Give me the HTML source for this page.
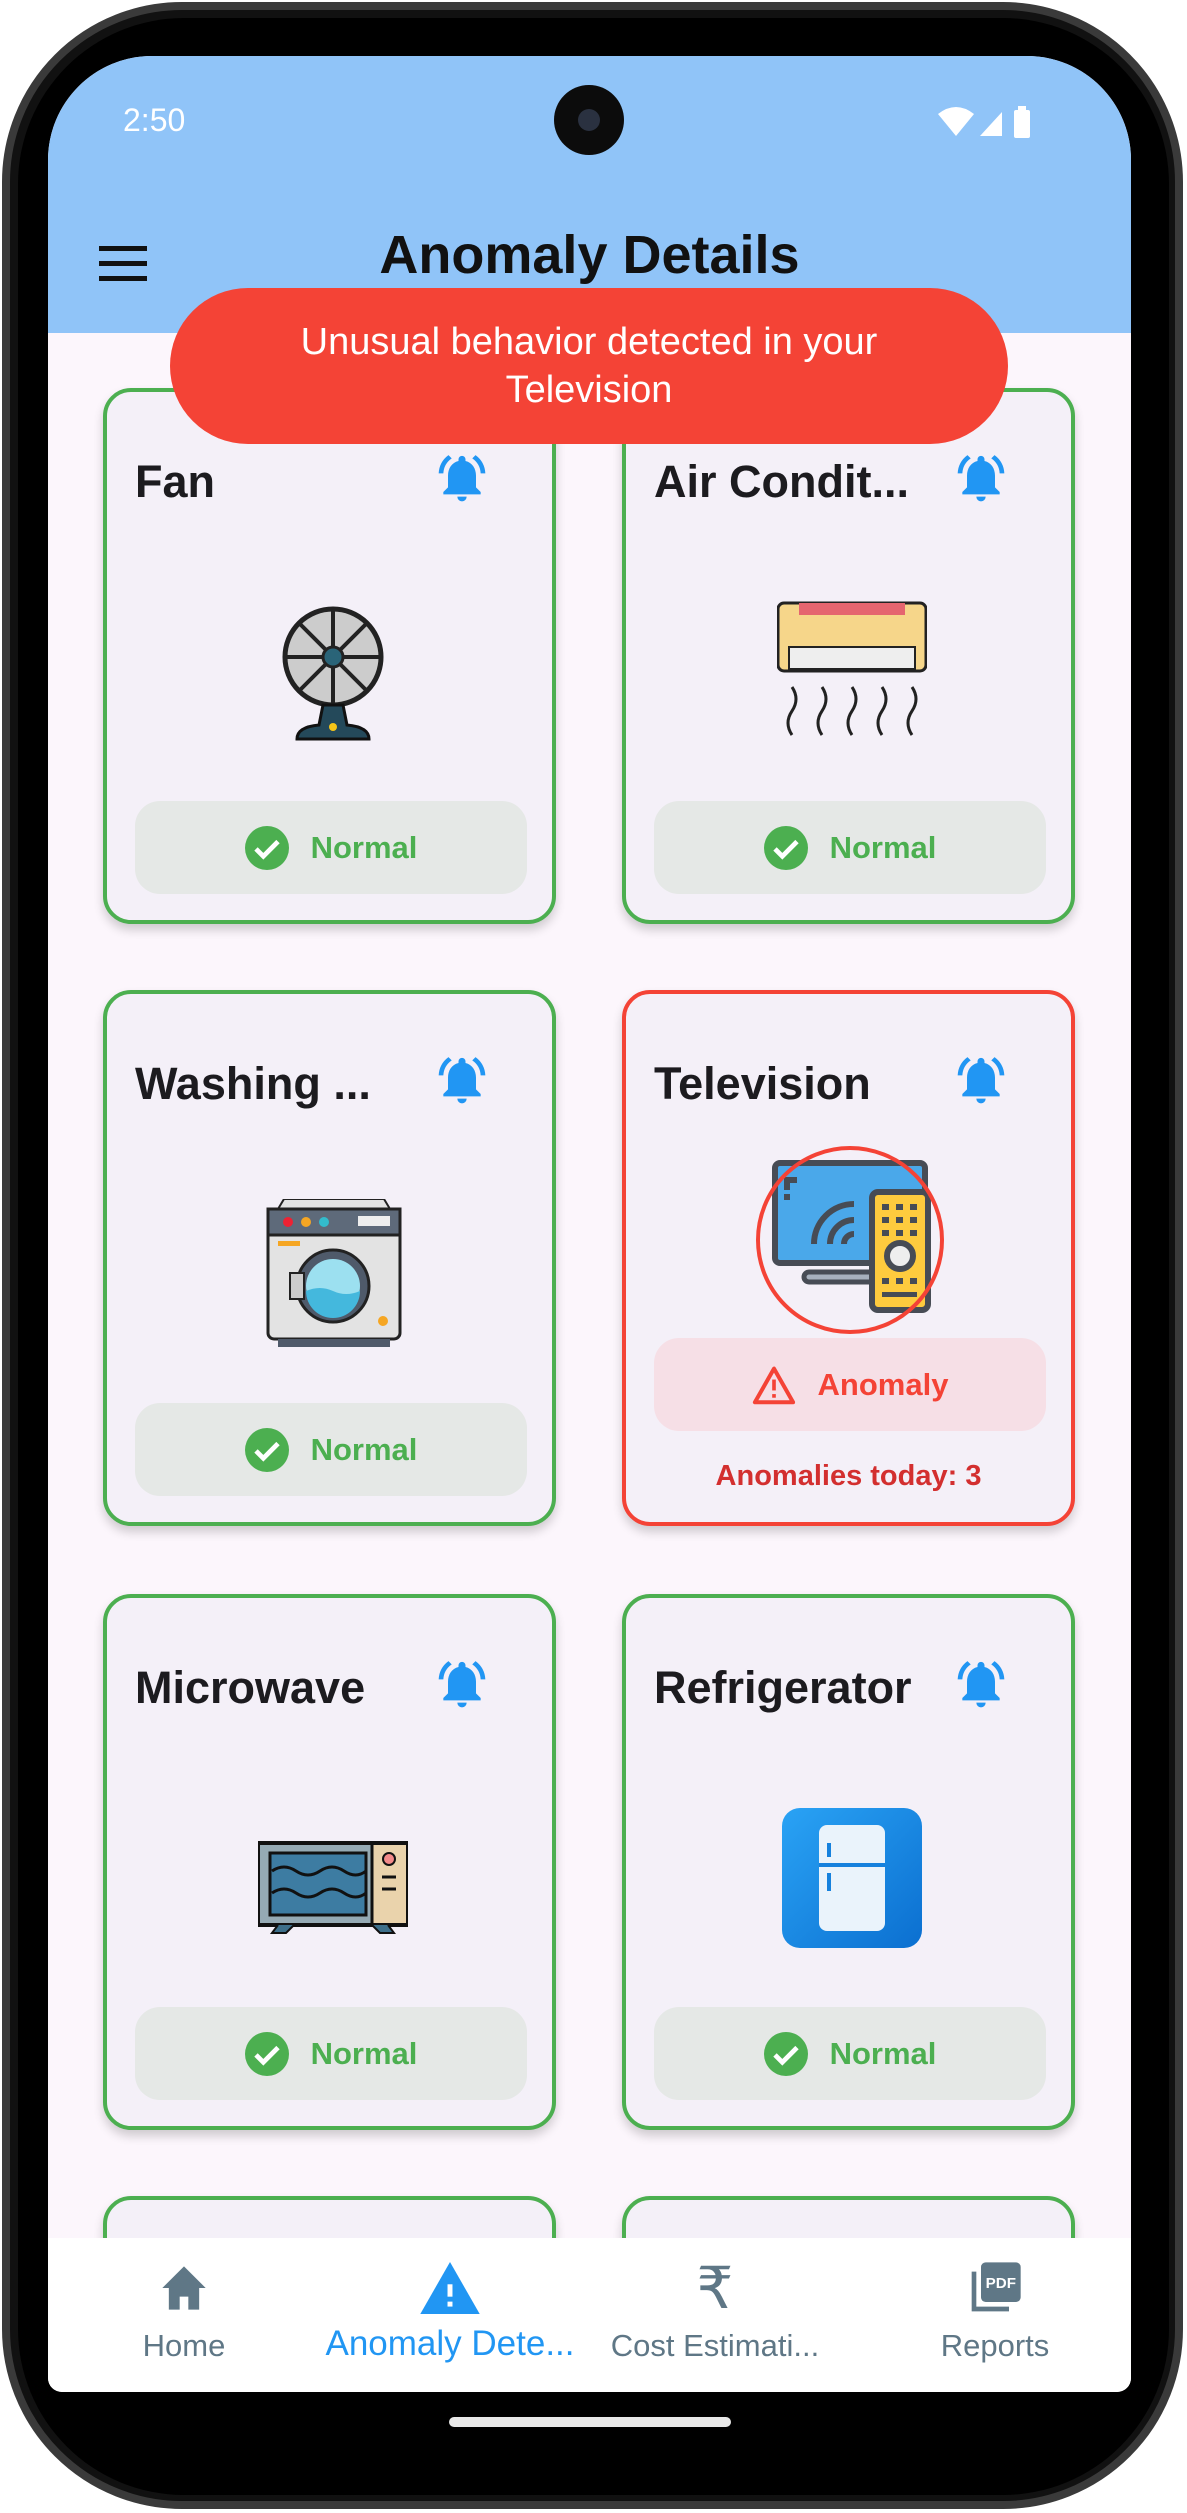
<!DOCTYPE html>
<html><head><meta charset="utf-8">
<style>
*{margin:0;padding:0;box-sizing:border-box}
html,body{width:1187px;height:2513px;overflow:hidden}
body{background:#fff;position:relative;font-family:"Liberation Sans",sans-serif}
.phone{position:absolute;left:2px;top:2px;width:1181px;height:2507px;border-radius:180px;background:#111;border:8px solid #3a3a3a}
.phone2{position:absolute;left:18px;top:18px;width:1151px;height:2477px;border-radius:166px;background:#000}
.screen{position:absolute;left:48px;top:56px;width:1083px;height:2336px;border-radius:104px 104px 14px 14px;overflow:hidden;background:#fcf6fc}
.appbar{position:absolute;left:0;top:0;width:1083px;height:277px;background:#90c4f8}
.time{position:absolute;left:75px;top:46px;color:#fff;font-size:32px}
.cam{position:absolute;left:506px;top:29px;width:70px;height:70px;border-radius:50%;background:#0c0c0c}
.cam:after{content:"";position:absolute;left:24px;top:24px;width:22px;height:22px;border-radius:50%;background:#2a3140}
.title{position:absolute;left:0;width:1083px;top:168px;text-align:center;font-size:54px;font-weight:bold;color:#111}
.ham{position:absolute;left:51px;top:190px;width:48px}
.ham i{display:block;height:5px;background:#111;margin-bottom:10px}
.card{position:absolute;width:453px;height:536px;border:4px solid #4caf50;border-radius:28px;background:#f4f0f8;box-shadow:0 6px 10px rgba(0,0,0,.18)}
.card.red{border-color:#f44336}
.ct{position:absolute;left:28px;top:64px;font-size:45px;font-weight:bold;color:#1c1b1f}
.bell{position:absolute;left:327px;top:58px}
.img{position:absolute;left:151px;top:205px;width:150px;height:150px}
.pill{position:absolute;left:28px;top:409px;width:392px;height:93px;border-radius:25px;background:#e5e8e6;display:flex;align-items:center;justify-content:center;font-size:31px;font-weight:bold;color:#4caf50}
.pill svg{margin-right:22px}
.nav{position:absolute;left:0;top:2182px;width:1083px;height:154px;background:#fff}
.ni{position:absolute;top:0;height:154px;text-align:center;color:#5f7786;font-size:31px}
.ni .ic{position:absolute;left:0;right:0;top:20px;height:60px;display:flex;justify-content:center;align-items:center}
.ni .lb{position:absolute;left:0;right:0;top:90px;white-space:nowrap}
.toast{position:absolute;left:122px;top:232px;width:838px;height:156px;border-radius:78px;background:#f44336;color:#fff;font-size:38px;text-align:center;padding-top:30px;line-height:48px;z-index:5}
.bar{position:absolute;left:449px;top:2417px;width:282px;height:10px;border-radius:5px;background:#e8e8e8}
</style></head><body>
<div class="phone"></div><div class="phone2"></div>
<div class="screen">
<div class="appbar"></div>
<div class="time">2:50</div>
<div class="cam"></div>
<svg style="position:absolute;left:890px;top:46px" width="100" height="40" viewBox="0 0 100 40">
<path d="M0 12 Q18 -2 36 12 L18 34Z" fill="#fff"/><path d="M42 34 L64 10 V34Z" fill="#fff"/><rect x="76" y="8" width="16" height="28" rx="2" fill="#fff"/><rect x="80" y="4" width="8" height="5" fill="#fff"/></svg>
<div class="ham"><i></i><i></i><i></i></div>
<div class="title">Anomaly Details</div>

<div class="card" style="left:55px;top:332px">
 <div class="ct">Fan</div>
 <svg class="bell" width="56" height="56" viewBox="0 0 24 24"><path d="M12 22a2 2 0 0 0 2-2h-4a2 2 0 0 0 2 2zm6-6v-5c0-3.1-1.6-5.6-4.5-6.3V4a1.5 1.5 0 0 0-3 0v.7C7.6 5.4 6 7.9 6 11v5l-2 2v1h16v-1z" fill="#2196f3"/><path d="M7.6 3.6L6.2 2.2A10.4 10.4 0 0 0 2 10h2a8.4 8.4 0 0 1 3.6-6.4zM20 10h2a10.4 10.4 0 0 0-4.2-7.8l-1.4 1.4A8.4 8.4 0 0 1 20 10z" fill="#2196f3"/></svg>
 <svg class="img" viewBox="0 0 150 150"><circle cx="75" cy="60" r="48" fill="#ccc" stroke="#222" stroke-width="5"/><g stroke="#222" stroke-width="4" fill="none"><path d="M75 14V106M29 60H121M42 27L108 93M108 27L42 93"/></g><circle cx="75" cy="60" r="10" fill="#2a6478" stroke="#222" stroke-width="3"/><path d="M65 108h20l4 20q22 2 22 14H39q0-12 22-14z" fill="#24495a" stroke="#111" stroke-width="3"/><circle cx="75" cy="130" r="4" fill="#f5c518"/></svg>
 <div class="pill"><svg width="44" height="44" viewBox="0 0 24 24"><circle cx="12" cy="12" r="12" fill="#4caf50"/><path d="M6 12.5l4 4 8-8" stroke="#fff" stroke-width="2.6" fill="none"/></svg>Normal</div>
</div>

<div class="card" style="left:574px;top:332px">
 <div class="ct">Air Condit...</div>
 <svg class="bell" width="56" height="56" viewBox="0 0 24 24"><path d="M12 22a2 2 0 0 0 2-2h-4a2 2 0 0 0 2 2zm6-6v-5c0-3.1-1.6-5.6-4.5-6.3V4a1.5 1.5 0 0 0-3 0v.7C7.6 5.4 6 7.9 6 11v5l-2 2v1h16v-1z" fill="#2196f3"/><path d="M7.6 3.6L6.2 2.2A10.4 10.4 0 0 0 2 10h2a8.4 8.4 0 0 1 3.6-6.4zM20 10h2a10.4 10.4 0 0 0-4.2-7.8l-1.4 1.4A8.4 8.4 0 0 1 20 10z" fill="#2196f3"/></svg>
 <svg class="img" viewBox="0 0 150 150"><rect x="1" y="6" width="148" height="68" rx="6" fill="#f6d68a" stroke="#222" stroke-width="3"/><rect x="22" y="6" width="106" height="12" fill="#e5656f"/><rect x="12" y="50" width="126" height="22" fill="#eee" stroke="#222" stroke-width="2"/><g stroke="#222" stroke-width="3" fill="none"><path d="M15 90q8 12 0 24t0 24M45 90q8 12 0 24t0 24M75 90q8 12 0 24t0 24M105 90q8 12 0 24t0 24M135 90q8 12 0 24t0 24"/></g></svg>
 <div class="pill"><svg width="44" height="44" viewBox="0 0 24 24"><circle cx="12" cy="12" r="12" fill="#4caf50"/><path d="M6 12.5l4 4 8-8" stroke="#fff" stroke-width="2.6" fill="none"/></svg>Normal</div>
</div>

<div class="card" style="left:55px;top:934px">
 <div class="ct">Washing ...</div>
 <svg class="bell" width="56" height="56" viewBox="0 0 24 24"><path d="M12 22a2 2 0 0 0 2-2h-4a2 2 0 0 0 2 2zm6-6v-5c0-3.1-1.6-5.6-4.5-6.3V4a1.5 1.5 0 0 0-3 0v.7C7.6 5.4 6 7.9 6 11v5l-2 2v1h16v-1z" fill="#2196f3"/><path d="M7.6 3.6L6.2 2.2A10.4 10.4 0 0 0 2 10h2a8.4 8.4 0 0 1 3.6-6.4zM20 10h2a10.4 10.4 0 0 0-4.2-7.8l-1.4 1.4A8.4 8.4 0 0 1 20 10z" fill="#2196f3"/></svg>
 <svg class="img" viewBox="0 0 150 150"><path d="M20 10l6-10h100l6 10z" fill="#e3e3e3" stroke="#222" stroke-width="2"/><rect x="10" y="10" width="132" height="130" rx="6" fill="#e3e3e3" stroke="#222" stroke-width="3"/><rect x="10" y="10" width="132" height="26" fill="#5e6a7a" stroke="#222" stroke-width="3"/><circle cx="30" cy="23" r="5" fill="#e23"/><circle cx="48" cy="23" r="5" fill="#f5a623"/><circle cx="66" cy="23" r="5" fill="#3bc"/><rect x="100" y="17" width="32" height="10" fill="#eee"/><rect x="20" y="42" width="22" height="5" fill="#f5a623"/><circle cx="75" cy="87" r="36" fill="#4f5a6a" stroke="#222" stroke-width="3"/><circle cx="75" cy="87" r="27" fill="#9ce0f0"/><path d="M48 92q14-6 27 0t27 0 A27 27 0 0 1 48 92z" fill="#44b8dd"/><rect x="32" y="74" width="14" height="26" fill="#ccc" stroke="#222" stroke-width="2"/><circle cx="125" cy="122" r="5" fill="#f5a623"/><rect x="20" y="140" width="112" height="8" fill="#4f5a6a"/></svg>
 <div class="pill"><svg width="44" height="44" viewBox="0 0 24 24"><circle cx="12" cy="12" r="12" fill="#4caf50"/><path d="M6 12.5l4 4 8-8" stroke="#fff" stroke-width="2.6" fill="none"/></svg>Normal</div>
</div>

<div class="card red" style="left:574px;top:934px">
 <div class="ct">Television</div>
 <svg class="bell" width="56" height="56" viewBox="0 0 24 24"><path d="M12 22a2 2 0 0 0 2-2h-4a2 2 0 0 0 2 2zm6-6v-5c0-3.1-1.6-5.6-4.5-6.3V4a1.5 1.5 0 0 0-3 0v.7C7.6 5.4 6 7.9 6 11v5l-2 2v1h16v-1z" fill="#2196f3"/><path d="M7.6 3.6L6.2 2.2A10.4 10.4 0 0 0 2 10h2a8.4 8.4 0 0 1 3.6-6.4zM20 10h2a10.4 10.4 0 0 0-4.2-7.8l-1.4 1.4A8.4 8.4 0 0 1 20 10z" fill="#2196f3"/></svg>
 <svg style="position:absolute;left:128px;top:150px" width="196" height="196" viewBox="0 0 196 196">
  <rect x="21" y="19" width="150" height="100" rx="5" fill="#4aa8ea" stroke="#474c55" stroke-width="6"/>
  <path d="M33 46v-10h10M33 50v6" stroke="#474c55" stroke-width="6" fill="none"/>
  <rect x="50" y="128" width="76" height="10" rx="5" fill="#a6b0bd" stroke="#474c55" stroke-width="5"/>
  <g stroke="#474c55" stroke-width="6" fill="none"><path d="M60 100a40 40 0 0 1 40-40M76 100a24 24 0 0 1 24-24M90 100a10 10 0 0 1 10-10"/></g>
  <rect x="118" y="48" width="56" height="118" rx="6" fill="#fecb3e" stroke="#474c55" stroke-width="6"/>
  <circle cx="146" cy="112" r="13" fill="#eee" stroke="#474c55" stroke-width="6"/>
  <g fill="#474c55"><rect x="128" y="60" width="7" height="6"/><rect x="142" y="60" width="7" height="6"/><rect x="156" y="60" width="7" height="6"/><rect x="128" y="73" width="7" height="6"/><rect x="142" y="73" width="7" height="6"/><rect x="156" y="73" width="7" height="6"/><rect x="128" y="86" width="7" height="6"/><rect x="142" y="86" width="7" height="6"/><rect x="156" y="86" width="7" height="6"/><rect x="128" y="134" width="7" height="6"/><rect x="142" y="134" width="7" height="6"/><rect x="156" y="134" width="7" height="6"/><rect x="128" y="148" width="35" height="5"/></g>
  <circle cx="96" cy="96" r="92" fill="none" stroke="#f44336" stroke-width="4"/>
 </svg>
 <div class="pill" style="top:344px;background:#f6dfe6;color:#f44336"><svg width="44" height="40" viewBox="0 0 24 22"><path d="M12 2L1.5 20.5h21z" fill="none" stroke="#f44336" stroke-width="2.2" stroke-linejoin="round"/><rect x="11" y="8" width="2" height="6" fill="#f44336"/><rect x="11" y="16" width="2" height="2" fill="#f44336"/></svg>Anomaly</div>
 <div style="position:absolute;left:0;width:445px;top:466px;text-align:center;color:#d32f2f;font-size:29px;font-weight:bold">Anomalies today: 3</div>
</div>

<div class="card" style="left:55px;top:1538px">
 <div class="ct">Microwave</div>
 <svg class="bell" width="56" height="56" viewBox="0 0 24 24"><path d="M12 22a2 2 0 0 0 2-2h-4a2 2 0 0 0 2 2zm6-6v-5c0-3.1-1.6-5.6-4.5-6.3V4a1.5 1.5 0 0 0-3 0v.7C7.6 5.4 6 7.9 6 11v5l-2 2v1h16v-1z" fill="#2196f3"/><path d="M7.6 3.6L6.2 2.2A10.4 10.4 0 0 0 2 10h2a8.4 8.4 0 0 1 3.6-6.4zM20 10h2a10.4 10.4 0 0 0-4.2-7.8l-1.4 1.4A8.4 8.4 0 0 1 20 10z" fill="#2196f3"/></svg>
 <svg class="img" viewBox="0 0 150 150"><rect x="0" y="40" width="150" height="82" fill="#95aab4" stroke="#111" stroke-width="4"/><rect x="114" y="42" width="34" height="78" fill="#ead3ac"/><rect x="12" y="50" width="96" height="62" fill="#3d7ca2" stroke="#111" stroke-width="3"/><g stroke="#111" stroke-width="3" fill="none"><path d="M14 68q12-8 24 0t24 0 24 0 22 0M14 90q12-8 24 0t24 0 24 0 22 0M114 42v80"/></g><circle cx="131" cy="56" r="6" fill="#f38a8a" stroke="#111" stroke-width="2"/><path d="M124 74h14M124 86h14" stroke="#111" stroke-width="3"/><path d="M20 122l-6 8h14l8-8M130 122l6 8h-14l-8-8" fill="#3d6f8a" stroke="#111" stroke-width="2"/></svg>
 <div class="pill"><svg width="44" height="44" viewBox="0 0 24 24"><circle cx="12" cy="12" r="12" fill="#4caf50"/><path d="M6 12.5l4 4 8-8" stroke="#fff" stroke-width="2.6" fill="none"/></svg>Normal</div>
</div>

<div class="card" style="left:574px;top:1538px">
 <div class="ct">Refrigerator</div>
 <svg class="bell" width="56" height="56" viewBox="0 0 24 24"><path d="M12 22a2 2 0 0 0 2-2h-4a2 2 0 0 0 2 2zm6-6v-5c0-3.1-1.6-5.6-4.5-6.3V4a1.5 1.5 0 0 0-3 0v.7C7.6 5.4 6 7.9 6 11v5l-2 2v1h16v-1z" fill="#2196f3"/><path d="M7.6 3.6L6.2 2.2A10.4 10.4 0 0 0 2 10h2a8.4 8.4 0 0 1 3.6-6.4zM20 10h2a10.4 10.4 0 0 0-4.2-7.8l-1.4 1.4A8.4 8.4 0 0 1 20 10z" fill="#2196f3"/></svg>
 <svg class="img" viewBox="0 0 150 150"><defs><linearGradient id="g" x1="0" y1="0" x2="1" y2="1"><stop offset="0" stop-color="#2aa3f5"/><stop offset="1" stop-color="#0b6fd0"/></linearGradient></defs><rect x="5" y="5" width="140" height="140" rx="18" fill="url(#g)"/><rect x="42" y="22" width="66" height="106" rx="8" fill="#eaf3fb"/><path d="M42 62h66" stroke="#1681dd" stroke-width="4"/><rect x="50" y="40" width="4" height="14" fill="#1681dd"/><rect x="50" y="70" width="4" height="18" fill="#1681dd"/></svg>
 <div class="pill"><svg width="44" height="44" viewBox="0 0 24 24"><circle cx="12" cy="12" r="12" fill="#4caf50"/><path d="M6 12.5l4 4 8-8" stroke="#fff" stroke-width="2.6" fill="none"/></svg>Normal</div>
</div>

<div class="card" style="left:55px;top:2140px"></div>
<div class="card" style="left:574px;top:2140px"></div>

<div class="toast">Unusual behavior detected in your<br>Television</div>

<div class="nav">
 <div class="ni" style="left:36px;width:200px"><div class="ic"><svg width="52" height="48" viewBox="0 0 24 22"><path d="M12 1L2 11h3v10h5v-6h4v6h5V11h3z" fill="#5f7786"/></svg></div><div class="lb">Home</div></div>
 <div class="ni" style="left:262px;width:280px;color:#2196f3;font-size:35px"><div class="ic"><svg width="60" height="52" viewBox="0 0 24 21"><path d="M12 0L0 21h24z" fill="#2196f3"/><rect x="11" y="9" width="2" height="5" fill="#fff"/><rect x="11" y="16" width="2" height="2" fill="#fff"/></svg></div><div class="lb" style="top:86px">Anomaly Dete...</div></div>
 <div class="ni" style="left:556px;width:222px"><div class="ic" style="font-size:58px">₹</div><div class="lb">Cost Estimati...</div></div>
 <div class="ni" style="left:832px;width:230px"><div class="ic"><svg width="56" height="56" viewBox="0 0 24 24"><path d="M2 5v17h16v-2H4V5z" fill="#5f7786"/><rect x="6" y="1" width="17" height="17" rx="2" fill="#5f7786"/><text x="14.5" y="12" font-size="6.5" font-weight="bold" fill="#fff" text-anchor="middle" font-family="Liberation Sans">PDF</text></svg></div><div class="lb">Reports</div></div>
</div>
</div>
<div class="bar"></div>
</body></html>
